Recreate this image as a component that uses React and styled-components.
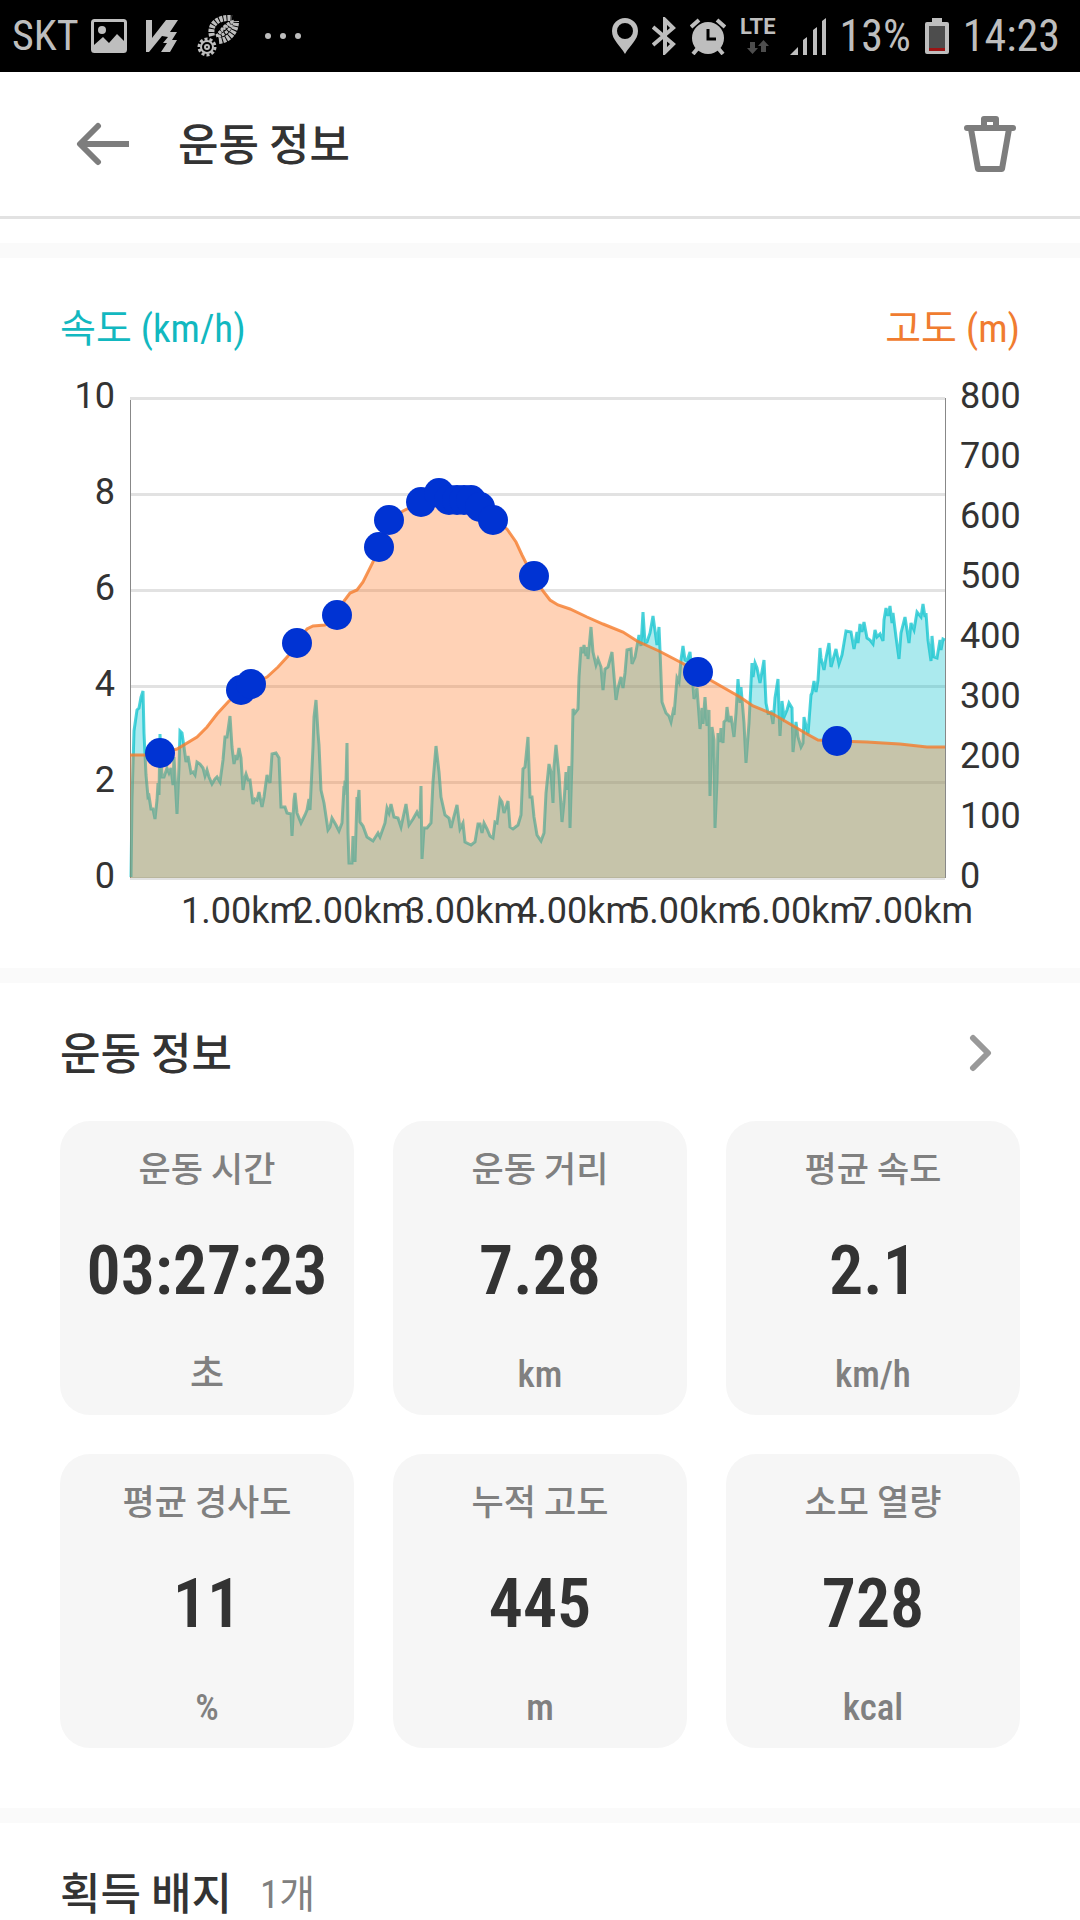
import React from 'react';
import styled, { createGlobalStyle } from 'styled-components';

const GlobalStyle = createGlobalStyle`
  * {
    box-sizing: border-box;
  }
  body {
    margin: 0;
    background: #ffffff;
    color: #333333;
    font-family: 'Roboto Condensed', Roboto, 'Noto Sans CJK KR', sans-serif;
  }
  h1, h2, p, dl, dt, dd {
    margin: 0;
  }
`;

const StatusBar = styled.div`
  display: flex;
  justify-content: space-between;
  align-items: center;
  height: 72px;
  padding: 0 20px 0 12px;
  background: #000000;
  color: #bebebe;
  font-size: 44px;
  line-height: 72px;
  white-space: nowrap;

  svg {
    display: block;
  }
`;

const StatusGroup = styled.div`
  display: flex;
  align-items: center;
  gap: ${(props) => props.$gap}px;
`;

const Carrier = styled.span`
  font-size: 42px;
`;

const Network = styled.div`
  display: flex;
  flex-direction: column;
  align-items: center;
  gap: 4px;
  font: bold 22px/18px Roboto, sans-serif;
`;

const Header = styled.header`
  display: flex;
  align-items: center;
  height: 147px;
  padding: 0 52px 0 64px;
  border-bottom: 3px solid #e2e2e2;
`;

const IconButton = styled.button`
  display: flex;
  padding: 12px;
  border: 0;
  background: none;
  color: ${(props) => props.$color || '#7d7d7d'};
  cursor: pointer;
`;

const HeaderTitle = styled.h1`
  flex: 1;
  padding: 4px 0 0 36px;
  font-size: 44px;
  font-weight: 500;
  line-height: 64px;
`;

const Divider = styled.div`
  height: 15px;
  margin-top: ${(props) => props.$top || 0}px;
  background: #fafafa;
`;

const ChartSection = styled.section`
  padding: 47px 60px 40px;

  svg {
    display: block;
    width: 100%;
    overflow: visible;
  }
`;

const ChartTitles = styled.div`
  display: flex;
  justify-content: space-between;
  font-size: 39px;
  line-height: 48px;
`;

const AxisTitle = styled.p`
  color: ${(props) => props.$color};
`;

const AxisText = styled.text`
  fill: #333333;
  font-family: Roboto, sans-serif;
  font-size: 36px;
`;

const Section = styled.section`
  padding: 38px 60px 0;
`;

const SectionHead = styled.div`
  display: flex;
  align-items: center;
  height: 64px;
  gap: 28px;
`;

const SectionTitle = styled.h2`
  padding-top: 4px;
  font-size: 44px;
  font-weight: 500;
  line-height: 64px;
`;

const MoreButton = styled(IconButton)`
  margin-left: auto;
  margin-right: 16px;
`;

const Count = styled.span`
  padding-top: 4px;
  color: #808080;
  font-size: 39px;
  line-height: 64px;
`;

const CardGrid = styled.dl`
  display: grid;
  grid-template-columns: repeat(3, 1fr);
  gap: 39px;
  margin-top: 36px;
  padding-bottom: 60px;
`;

const Card = styled.div`
  display: flex;
  flex-direction: column;
  justify-content: space-between;
  height: 294px;
  padding: 26px 0 16px;
  border-radius: 30px;
  background: #f6f6f6;
  text-align: center;
`;

const Label = styled.dt`
  color: #808080;
  font-size: 35px;
  font-weight: 500;
  line-height: 48px;
`;

const Value = styled.dd`
  padding-bottom: 4px;
  font-size: 68px;
  font-weight: 600;
  line-height: 76px;
`;

const Unit = styled.dd`
  color: #808080;
  font-size: 37px;
  font-weight: 500;
  line-height: 48px;
`;

const PLOT_WIDTH = 815;
const PLOT_HEIGHT = 480;

// x,y pairs inside the 815 x 480 plot area
const SPEED =
  '1,479 2,402 4,333 7,312 9,310 11,299 13,293 14,335 16,377 18,399 19,398 21,411 23,411 25,421 27,402 28,385 29,397 30,336 32,379 34,379 37,370 39,375 41,370 43,387 44,359 47,416 49,369 50,333 52,335 54,349 56,364 58,358 61,375 63,374 65,377 67,364 70,366 73,370 75,378 77,372 79,379 82,386 85,381 87,379 90,384 93,362 95,339 97,339 100,318 102,349 104,366 106,357 107,362 109,350 111,360 113,392 115,379 116,376 118,382 120,382 123,406 125,401 127,402 129,394 132,409 134,399 137,377 140,385 142,356 146,355 149,360 151,409 155,409 157,415 161,416 162,438 164,402 165,395 167,415 171,425 175,417 177,412 179,401 180,412 183,349 184,319 186,302 188,335 189,347 191,392 194,405 198,432 200,429 202,420 206,427 209,433 212,425 214,388 214,397 215,384 216,384 217,345 218,435 219,465 222,465 223,438 225,464 227,399 228,402 229,392 230,424 233,428 237,439 243,443 248,435 250,439 255,425 257,410 259,415 261,406 264,419 268,420 271,429 276,406 279,427 283,421 287,414 290,420 291,388 292,461 294,430 297,430 301,425 303,384 306,348 309,374 311,399 315,417 319,420 321,430 323,422 327,407 330,431 333,425 335,444 341,447 345,444 348,426 350,426 352,435 354,425 357,431 360,438 363,440 365,424 367,425 370,401 372,404 374,415 378,403 380,429 383,431 388,427 391,417 393,371 395,369 398,339 400,399 402,399 404,419 407,437 411,443 414,435 416,395 419,366 421,374 423,405 424,369 426,347 429,377 432,424 434,404 436,374 437,392 439,368 440,430 442,362 443,311 445,315 448,311 449,279 451,249 453,255 454,247 456,258 457,249 458,261 461,229 463,254 466,267 468,261 471,269 473,292 475,271 478,269 482,254 486,302 488,290 491,279 493,290 495,275 497,252 501,251 502,266 505,259 509,237 511,248 513,214 515,245 517,244 520,235 523,218 527,247 529,229 530,252 532,304 536,315 539,318 541,324 543,314 544,317 547,280 549,284 551,262 553,248 555,262 557,263 560,254 562,275 564,301 567,290 570,331 572,310 573,326 575,299 577,328 579,312 580,398 582,329 584,342 585,430 587,382 588,335 590,344 591,330 593,345 594,324 596,322 597,309 599,324 601,318 604,339 606,315 608,281 610,305 611,289 614,325 616,365 619,325 622,265 623,279 625,265 627,270 630,285 634,262 636,305 638,315 641,314 643,326 645,300 648,281 649,312 650,338 652,303 654,319 657,312 659,305 662,310 663,354 666,324 668,339 671,349 673,345 674,319 678,336 681,297 682,295 684,283 686,294 688,282 690,250 691,260 694,272 696,260 699,245 701,269 706,251 709,266 712,257 714,245 716,233 721,234 724,251 727,234 728,245 730,226 732,234 734,224 737,240 740,242 743,246 745,232 747,239 750,236 753,243 754,222 756,210 758,218 760,208 762,225 763,215 766,239 769,261 771,235 775,219 777,232 779,245 781,225 784,232 787,214 791,219 793,206 795,219 796,215 798,242 801,263 802,238 804,259 807,260 810,242 811,252 813,241 815,242';

const ALTITUDE =
  '0,357 17,357 30,355 47,351 67,339 77,329 87,316 98,304 111,292 121,286 137,279 148,269 158,258 167,245 177,231 183,228 195,227 207,217 214,203 220,195 227,192 233,184 243,164 249,149 259,122 273,113 291,104 309,95 319,102 334,102 341,102 350,109 363,122 377,131 386,144 392,157 396,165 404,178 413,193 420,202 428,207 440,211 457,219 473,226 493,234 507,243 529,253 552,265 568,274 582,283 610,299 623,308 643,316 660,326 677,336 688,342 707,343 737,344 753,345 770,346 797,349 815,349';

const MARKERS = [
  [30, 355], [111, 292], [121, 286], [167, 245], [207, 217], [249, 149],
  [259, 122], [291, 104], [309, 95], [319, 102], [327, 102], [334, 102],
  [341, 102], [350, 109], [363, 122], [404, 178], [568, 274], [707, 343],
];

const SPEED_TICKS = [10, 8, 6, 4, 2, 0];
const ALTITUDE_TICKS = [800, 700, 600, 500, 400, 300, 200, 100, 0];
const DISTANCE_TICKS = [1, 2, 3, 4, 5, 6, 7];

const STATS = [
  { label: '운동 시간', value: '03:27:23', unit: '초' },
  { label: '운동 거리', value: '7.28', unit: 'km' },
  { label: '평균 속도', value: '2.1', unit: 'km/h' },
  { label: '평균 경사도', value: '11', unit: '%' },
  { label: '누적 고도', value: '445', unit: 'm' },
  { label: '소모 열량', value: '728', unit: 'kcal' },
];

const area = (points) => `0,${PLOT_HEIGHT} ${points} ${PLOT_WIDTH},${PLOT_HEIGHT}`;

const PictureIcon = () => (
  <svg width="36" height="34" viewBox="0 0 36 34" fill="none">
    <rect x="1.5" y="1.5" width="33" height="31" rx="2" stroke="#bebebe" strokeWidth="3" />
    <circle cx="11" cy="11" r="4" fill="#bebebe" />
    <path d="M3 26l9-8 6 6 8-9 8 8v9H3z" fill="#bebebe" />
  </svg>
);

const VaccineIcon = () => (
  <svg width="32" height="32" viewBox="0 0 32 32" fill="#bebebe">
    <path d="M0 0h6v18L20 0h12l-8 12h7l-5 8h5l-7 12h-9l6-9h-4l5-6-6-1L3 32H0z" />
  </svg>
);

const ShoeIcon = () => (
  <svg width="42" height="42" viewBox="0 0 42 42" fill="none" stroke="#bebebe">
    <path d="M15 21C12 9 21 2 35 3" strokeWidth="6" strokeDasharray="3 1" />
    <path d="M22 26c10-1 17-9 17-20" strokeWidth="6" strokeDasharray="3 1" />
    <path d="M19 21c5-2 4-9 16-14-1 9-8 12-14 15" strokeWidth="3" strokeDasharray="3 1" />
    <path d="M22 18L34 8" strokeWidth="3" strokeDasharray="2 1" />
    <circle cx="10" cy="32" r="8" strokeWidth="3" strokeDasharray="3 2" />
    <circle cx="10" cy="32" r="6" strokeWidth="2" />
    <circle cx="10" cy="32" r="2" strokeWidth="2" />
  </svg>
);

const MoreDots = () => (
  <svg width="44" height="8" viewBox="-6 0 44 8" fill="#bebebe">
    <circle cx="4" cy="4" r="3" />
    <circle cx="19" cy="4" r="3" />
    <circle cx="34" cy="4" r="3" />
  </svg>
);

const PinIcon = () => (
  <svg width="26" height="36" viewBox="0 0 26 36" fill="#bebebe">
    <path fillRule="evenodd" d="M13 0a13 13 0 0 1 13 13c0 9-8 14-13 23C8 27 0 22 0 13A13 13 0 0 1 13 0zm0 5a8 8 0 1 0 0 16 8 8 0 0 0 0-16z" />
  </svg>
);

const BluetoothIcon = () => (
  <svg width="24" height="38" viewBox="0 0 24 38" fill="none" stroke="#bebebe" strokeWidth="4">
    <path d="M1 10l20 17-8 8V3l8 8L1 28" />
  </svg>
);

const AlarmIcon = () => (
  <svg width="36" height="37" viewBox="0 0 36 37">
    <circle cx="18" cy="20" r="16" fill="#bebebe" />
    <path d="M1 9l8-7M35 9l-8-7M8 30l-5 6M28 30l5 6" stroke="#bebebe" strokeWidth="4" />
    <path d="M18 11v10h8" fill="none" stroke="#000000" strokeWidth="3" />
  </svg>
);

const DataArrows = () => (
  <svg width="22" height="14" viewBox="0 0 22 14" fill="#4d4d4d">
    <path d="M3 2h5v6h3l-5.500 6L0 8h3zM14 12h5V6h3l-5.500-6L11 6h3z" />
  </svg>
);

const SignalIcon = () => (
  <svg width="36" height="37" viewBox="0 0 36 37" fill="#bebebe">
    <path d="M0 37l8-8v8zM13 22l4-3v18h-4zM23 12l4-3v28h-4zM32 3l4-3v37h-4z" />
  </svg>
);

const BatteryIcon = () => (
  <svg width="24" height="36" viewBox="0 0 24 36">
    <path d="M7 0h10v4h5q2 0 2 2v28q0 2-2 2H2q-2 0-2-2V6q0-2 2-2h5z" fill="#bebebe" />
    <path d="M4 8h16v25H4z" fill="#4d4d4d" />
    <path d="M4 30h16v3H4z" fill="#9b1414" />
  </svg>
);

const BackIcon = () => (
  <svg width="54" height="44" viewBox="0 0 54 44" fill="none" stroke="currentColor" strokeWidth="6">
    <path d="M22 4L4 22l18 18" strokeLinecap="round" strokeLinejoin="round" />
    <path d="M5 22h48" />
  </svg>
);

const TrashIcon = () => (
  <svg width="52" height="58" viewBox="0 0 52 58" fill="none" stroke="currentColor" strokeWidth="6" strokeLinejoin="round">
    <path d="M3 13h46" strokeLinecap="round" />
    <path d="M20 12V4h12v8M7 14l7 40h24l7-40" />
  </svg>
);

const ChevronIcon = () => (
  <svg width="24" height="38" viewBox="0 0 24 38" fill="none" stroke="currentColor" strokeWidth="6">
    <path d="M5 4l15 15L5 34" strokeLinecap="round" strokeLinejoin="round" />
  </svg>
);

const WorkoutChart = () => (
  <svg viewBox="0 0 960 575" role="img" aria-label="속도와 고도 그래프">
    <g transform="translate(70 45)">
      {SPEED_TICKS.map((tick, i) => (
        <g key={tick}>
          <path d={`M0 ${i * 96 + 0.5}H${PLOT_WIDTH}`} stroke="#e2e2e2" strokeWidth="3" />
          <AxisText x="-15" y={i * 96 + 10} textAnchor="end">
            {tick}
          </AxisText>
        </g>
      ))}
      {ALTITUDE_TICKS.map((tick, i) => (
        <AxisText key={tick} x="830" y={i * 60 + 10}>
          {tick}
        </AxisText>
      ))}
      {DISTANCE_TICKS.map((tick) => (
        <AxisText key={tick} x={tick * 112 - 1} y="525" textAnchor="middle">
          {`${tick}.00km`}
        </AxisText>
      ))}
      <path d={`M0.500 2V${PLOT_HEIGHT}M${PLOT_WIDTH + 0.5} 0V${PLOT_HEIGHT}`} stroke="#888888" />
      <polygon points={area(SPEED)} fill="#00bfcb" fillOpacity="0.33" />
      <polyline points={SPEED} fill="none" stroke="#00bfcb" strokeOpacity="0.7" strokeWidth="3" />
      <polygon points={area(ALTITUDE)} fill="#ff7720" fillOpacity="0.33" />
      <polyline points={ALTITUDE} fill="none" stroke="#f57c2c" strokeOpacity="0.8" strokeWidth="3" />
      {MARKERS.map(([x, y]) => (
        <circle key={x} cx={x} cy={y} r="15" fill="#0033d3" />
      ))}
    </g>
  </svg>
);

const App = () => {
  return (
    <>
      <GlobalStyle />
      <StatusBar>
        <StatusGroup $gap={12}>
          <Carrier>SKT</Carrier>
          <StatusGroup $gap={19}>
            <PictureIcon />
            <VaccineIcon />
            <ShoeIcon />
            <MoreDots />
          </StatusGroup>
        </StatusGroup>
        <StatusGroup $gap={14}>
          <PinIcon />
          <BluetoothIcon />
          <AlarmIcon />
          <Network>
            LTE
            <DataArrows />
          </Network>
          <SignalIcon />
          <span>13%</span>
          <BatteryIcon />
          <span>14:23</span>
        </StatusGroup>
      </StatusBar>

      <Header>
        <IconButton type="button" aria-label="뒤로">
          <BackIcon />
        </IconButton>
        <HeaderTitle>운동 정보</HeaderTitle>
        <IconButton type="button" aria-label="삭제">
          <TrashIcon />
        </IconButton>
      </Header>

      <main>
        <Divider $top={24} />
        <ChartSection>
          <ChartTitles>
            <AxisTitle $color="#12b8c0">속도 (km/h)</AxisTitle>
            <AxisTitle $color="#f07c30">고도 (m)</AxisTitle>
          </ChartTitles>
          <WorkoutChart />
        </ChartSection>

        <Divider />
        <Section>
          <SectionHead>
            <SectionTitle>운동 정보</SectionTitle>
            <MoreButton type="button" aria-label="운동 정보 더보기" $color="#999999">
              <ChevronIcon />
            </MoreButton>
          </SectionHead>
          <CardGrid>
            {STATS.map(({ label, value, unit }) => (
              <Card key={label}>
                <Label>{label}</Label>
                <Value>{value}</Value>
                <Unit>{unit}</Unit>
              </Card>
            ))}
          </CardGrid>
        </Section>

        <Divider />
        <Section>
          <SectionHead>
            <SectionTitle>획득 배지</SectionTitle>
            <Count>1개</Count>
          </SectionHead>
        </Section>
      </main>
    </>
  );
};

export default App;
